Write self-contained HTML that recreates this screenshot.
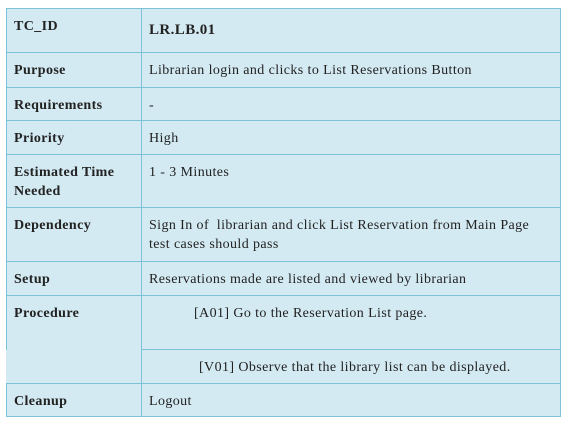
<!DOCTYPE html>
<html><head><meta charset="utf-8"><style>
html,body{margin:0;padding:0;background:#fff;width:581px;height:428px;overflow:hidden}
body{font-family:"Liberation Serif","Times New Roman",Times,"Nimbus Roman","DejaVu Serif",serif;font-size:14px;color:#222;position:relative;letter-spacing:0.4px}
.c{position:absolute;background:#d3eaf2;border:1px solid #7cc3d8;box-sizing:border-box;line-height:19px;padding:8px 7px;white-space:nowrap}
.l{left:6px;width:136px;font-weight:bold}
.r{left:141px;width:420px}
</style></head><body>
<div class="c l" style="top:8px;height:45px;padding-top:8px">TC_ID</div>
<div class="c r" style="top:8px;height:45px;padding-top:12px;font-weight:bold;font-size:15px">LR.LB.01</div>
<div class="c l" style="top:52px;height:36px">Purpose</div>
<div class="c r" style="top:52px;height:36px">Librarian login and clicks to List Reservations Button</div>
<div class="c l" style="top:87px;height:34px">Requirements</div>
<div class="c r" style="top:87px;height:34px">-</div>
<div class="c l" style="top:120px;height:35px">Priority</div>
<div class="c r" style="top:120px;height:35px">High</div>
<div class="c l" style="top:154px;height:54px">Estimated Time<br>Needed</div>
<div class="c r" style="top:154px;height:54px">1 - 3 Minutes</div>
<div class="c l" style="top:207px;height:55px">Dependency</div>
<div class="c r" style="top:207px;height:55px">Sign In of &nbsp;librarian and click List Reservation from Main Page<br>test cases should pass</div>
<div class="c l" style="top:261px;height:35px">Setup</div>
<div class="c r" style="top:261px;height:35px">Reservations made are listed and viewed by librarian</div>
<div class="c l" style="top:295px;height:89px">Procedure</div>
<div style="position:absolute;left:6px;top:350px;width:2px;height:33px;background:#d3eaf2"></div>
<div class="c r" style="top:295px;height:55px;padding-left:52px">[A01] Go to the Reservation List page.</div>
<div class="c r" style="top:349px;height:35px;padding-left:57px">[V01] Observe that the library list can be displayed.</div>
<div class="c l" style="top:383px;height:34px">Cleanup</div>
<div class="c r" style="top:383px;height:34px">Logout</div>
</body></html>
